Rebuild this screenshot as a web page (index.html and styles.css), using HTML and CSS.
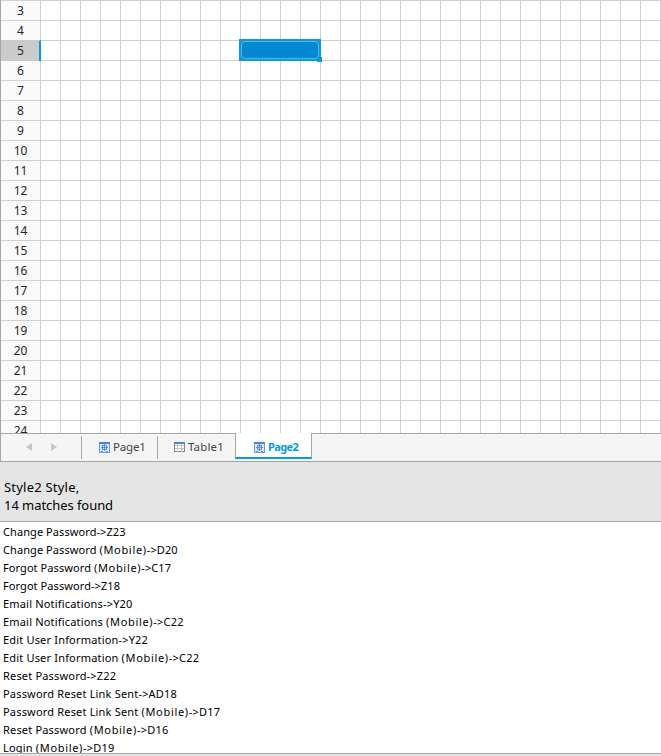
FILE: index.html
```
<!DOCTYPE html>
<html lang="en">
<head>
<meta charset="utf-8">
<title>Page2</title>
<link rel="stylesheet" href="styles.css">
</head>
<body>
<svg width="0" height="0" class="defs">
  <symbol id="page" viewBox="0 0 11 11">
    <rect x=".5" y=".5" width="10" height="10" fill="#dce9fd" stroke="#6b98ea"/>
    <path d="M0 1h11" stroke="#4a82e2" stroke-width="2"/>
    <path d="M3 3.5h5M2 5.5h7M3 7.5h5M5.5 2v7M3.5 3v5M7.5 3v5M2 9.5h2M7 9.5h2" fill="none" stroke="#4d84e4" stroke-width=".9"/>
  </symbol>
  <symbol id="table" viewBox="0 0 11 11">
    <rect x=".5" y=".5" width="10" height="9" fill="#fff" stroke="#858585"/>
    <path d="M1 3.5h9M1 6.5h9M3.5 2v8M7.5 2v8" stroke="#c4c4c4"/>
    <path d="M0 1h11" stroke="#4d84df" stroke-width="2"/>
  </symbol>
</svg>
<main class="app">
  <section class="sheet">
    <ol class="rows">
      <li>3</li><li>4</li><li class="current">5</li><li>6</li><li>7</li><li>8</li><li>9</li><li>10</li><li>11</li><li>12</li><li>13</li><li>14</li><li>15</li><li>16</li><li>17</li><li>18</li><li>19</li><li>20</li><li>21</li><li>22</li><li>23</li><li>24</li>
    </ol>
    <div class="cells"><div class="selection"><span class="fill"></span><i class="handle"></i></div></div>
  </section>
  <nav class="tabs">
    <div class="arrows">
      <svg width="6" height="8"><path d="M6 0v8L0 4z" fill="#c6c6c6"/></svg>
      <svg width="6" height="8"><path d="M0 0v8l6-4z" fill="#c6c6c6"/></svg>
    </div>
    <div class="tab first"><svg class="icon"><use href="#page"/></svg><span>Page1</span></div>
    <div class="tab second"><svg class="icon"><use href="#table"/></svg><span>Table1</span></div>
    <div class="tab active"><svg class="icon"><use href="#page"/></svg><span>Page2</span></div>
  </nav>
  <header class="summary">
    <div class="style-name">Style2 Style,</div>
    <div>14 matches found</div>
  </header>
  <ul class="results">
    <li class="tight">Change Password-&gt;Z23</li>
    <li class="tight">Change Password <span>(Mobile)</span>-&gt;D20</li>
    <li class="tight">Forgot Password <span>(Mobile)</span>-&gt;C17</li>
    <li class="tight">Forgot Password-&gt;Z18</li>
    <li>Email Notifications-&gt;Y20</li>
    <li>Email Notifications <span>(Mobile)</span>-&gt;C22</li>
    <li>Edit User Information-&gt;Y22</li>
    <li>Edit User Information <span>(Mobile)</span>-&gt;C22</li>
    <li>Reset Password-&gt;Z22</li>
    <li>Password Reset Link Sent-&gt;AD18</li>
    <li>Password Reset Link Sent <span>(Mobile)</span>-&gt;D17</li>
    <li>Reset Password <span>(Mobile)</span>-&gt;D16</li>
    <li>Login <span>(Mobile)</span>-&gt;D19</li>
  </ul>
  <footer class="edge"></footer>
</main>
</body>
</html>
```
FILE: styles.css
```
* { box-sizing: border-box; }
body { margin: 0; overflow: hidden; background: #e5e5e5; color: #000; font-family: "Noto Sans", sans-serif; }
.defs { position: absolute; }
ol, ul { list-style: none; margin: 0; padding: 0; }
.app { width: 661px; height: 756px; display: flex; flex-direction: column; }
.app > * { flex: none; }
.sheet { height: 433px; display: flex; overflow: hidden; background: #fff; }
.rows { width: 40px; border-left: 1px solid #a6a6a6; background: #fafafa; flex: none; }
.rows li { height: 20px; border-top: 1px solid #d0d0d0; font-size: 12px; line-height: 20px; text-align: center; color: #262626; }
.rows .current { position: relative; z-index: 1; width: 40px; height: 21px; margin-bottom: -1px; padding-left: 1px; border-top-color: #cbcbcb; border-right: 2px solid #0a9bdc; background: #cbcbcb; }
.cells { flex: 1; position: relative; background-image: linear-gradient(#d0d0d0 1px, transparent 1px), linear-gradient(90deg, #d0d0d0 1px, transparent 1px); background-size: 20px 20px; }
.selection { position: absolute; left: 199px; top: 39px; width: 82px; height: 22px; background: #0a9bdf; padding: 2px; }
.fill { display: block; height: 18px; border: 1px solid #55b5e6; border-radius: 4px; background: #0288d1; }
.handle { position: absolute; right: -1px; bottom: -1px; width: 5px; height: 5px; background: #0a9bdf; }
.tabs { height: 29px; display: flex; border: solid #a6a6a6; border-width: 1px 0 1px 1px; background: #f5f5f5; color: #444; font-size: 11.5px; }
.arrows { width: 80px; display: flex; gap: 19px; padding: 9px 0 0 25px; }
.tab { display: flex; gap: 3px; height: 27px; }
.icon { width: 11px; height: 11px; flex: none; }
.first, .second { height: 23px; margin-top: 2px; border-left: 1px solid #a6a6a6; line-height: 22px; }
.first .icon, .second .icon { margin-top: 6px; }
.first { width: 76px; padding-left: 17px; letter-spacing: -.2px; }
.second { width: 78px; padding-left: 16px; letter-spacing: .15px; }
.active { width: 77px; height: 26px; margin-top: -1px; padding-left: 18px; border: solid #a6a6a6; border-width: 0 1px; border-bottom: 2px solid #0a9bdc; background: #fff; color: #0a9bdc; font-weight: 700; line-height: 28px; font-size: 11px; letter-spacing: -.6px; }
.active .icon { margin-top: 9px; }
.summary { height: 60px; padding: 16px 4px 0; border-bottom: 1px solid #a6a6a6; background: #e5e5e5; font-size: 13px; line-height: 18px; letter-spacing: -.06px; }
.style-name { letter-spacing: .22px; }
.results { height: 231px; padding: 1px 3px 0; overflow: hidden; background: #fff; font-size: 11px; line-height: 18px; letter-spacing: .18px; }
.results .tight { letter-spacing: .08px; }
.results span { letter-spacing: .68px; }
.edge { height: 3px; border-top: 1px solid #a6a6a6; background: #e5e5e5; }
```
